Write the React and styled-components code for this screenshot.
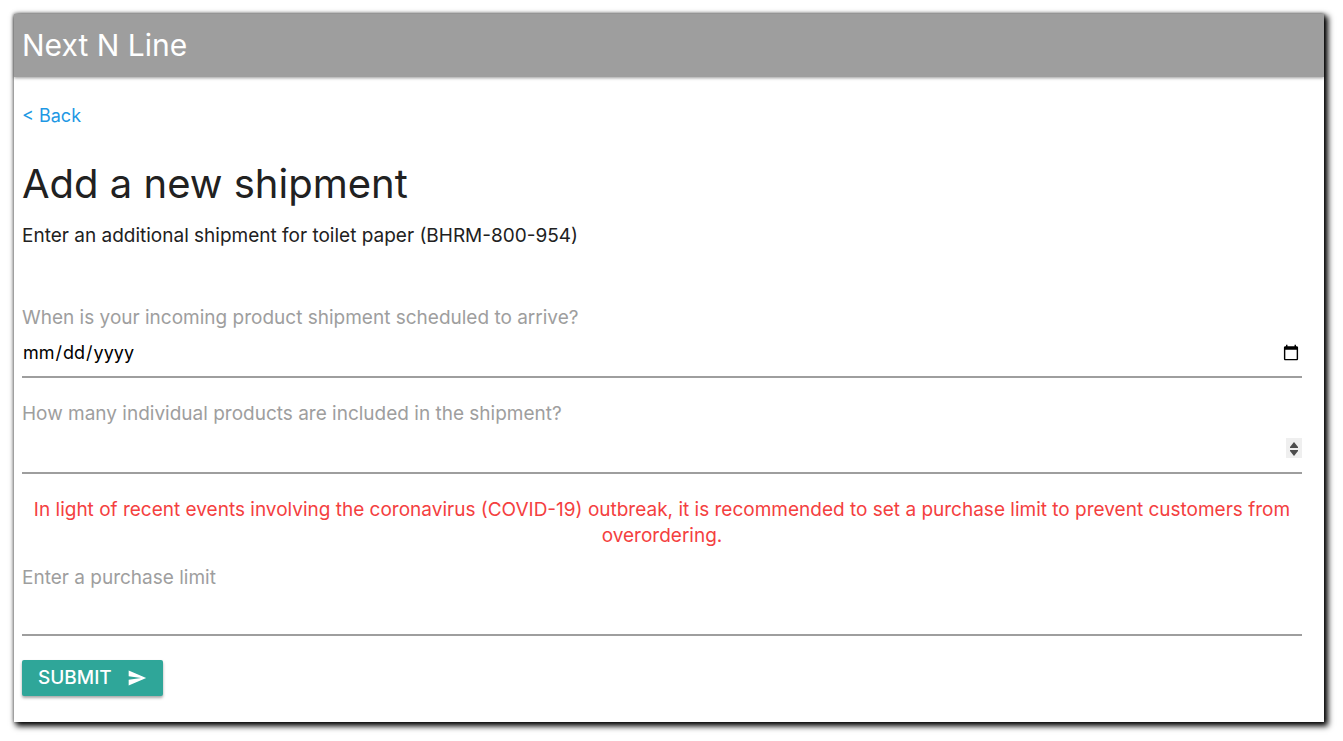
import React from "react";
import styled, { createGlobalStyle } from "styled-components";

const GlobalStyle = createGlobalStyle`
  *, *::before, *::after { box-sizing: border-box; }
  body {
    margin: 0;
    background: #fff;
    color: #212121;
    font-family: Inter, "Liberation Sans", sans-serif;
    font-size: 19px;
    line-height: 26px;
  }
`;

const Window = styled.div`
  margin: 14px 19px 19px 14px;
  background: #fff;
  box-shadow: 0 0 4px rgba(0, 0, 0, 0.5), 3px 3px 6px 1px #000;
`;

const Header = styled.header`
  padding: 0 8px;
  background: #9e9e9e;
  color: #fff;
  font-size: 30px;
  line-height: 63px;
  box-shadow: 0 1px 3px rgba(0, 0, 0, 0.4);
`;

const Content = styled.main`
  padding: 26px 22px 26px 8px;
`;

const BackLink = styled.a`
  display: block;
  width: fit-content;
  color: #1e98e4;
  font-size: 18px;
  text-decoration: none;
`;

const Title = styled.h1`
  margin: 30px 0 14px;
  font-size: 40px;
  line-height: 50px;
  font-weight: 400;
`;

const Intro = styled.p`
  margin: 0 0 56px;
`;

const Form = styled.form`
  display: flex;
  flex-direction: column;
`;

const Field = styled.div`
  display: flex;
  flex-direction: column;
  margin-bottom: 23px;
`;

const Label = styled.label`
  color: #9e9e9e;
`;

const Input = styled.input`
  width: 100%;
  height: ${({ $compact }) => ($compact ? 45 : 47)}px;
  padding: 0 0 2px;
  border: 0;
  border-bottom: 2px solid #9e9e9e;
  border-radius: 0;
  outline: 0;
  background: transparent;
  color: #000;
  font: inherit;
  font-size: 18px;

  &::-webkit-inner-spin-button {
    appearance: none;
    width: 16px;
    height: 20px;
    opacity: 1;
    background: #efefef
      url("data:image/svg+xml,%3Csvg xmlns='http://www.w3.org/2000/svg' width='16' height='20'%3E%3Cpath d='M8 4l4 5v1H4V9zM8 18l4-5v-1H4v1z' fill='%234d4d4d'/%3E%3C/svg%3E")
      center no-repeat;
  }
`;

const Notice = styled.p`
  margin: 0 0 16px;
  color: #f44040;
  text-align: center;
`;

const SubmitButton = styled.button`
  display: flex;
  align-items: center;
  align-self: flex-start;
  gap: 15px;
  height: 36px;
  margin: 1px 0 0;
  padding: 0 16px;
  border: 0;
  border-radius: 2px;
  background: #2fa699;
  color: #fff;
  font: inherit;
  font-weight: 500;
  text-transform: uppercase;
  box-shadow: 0 2px 3px rgba(0, 0, 0, 0.35);
  cursor: pointer;
`;

const SendIcon = () => (
  <svg width="20" height="20" viewBox="0 0 24 24" fill="currentColor" aria-hidden="true">
    <path d="M2.01 21L23 12 2.01 3 2 10l15 2-15 2z" />
  </svg>
);

export default function App() {
  return (
    <>
      <GlobalStyle />
      <Window>
        <Header>Next N Line</Header>
        <Content>
          <BackLink href="#back">&lt; Back</BackLink>
          <Title>Add a new shipment</Title>
          <Intro>Enter an additional shipment for toilet paper (BHRM-800-954)</Intro>
          <Form onSubmit={(event) => event.preventDefault()}>
            <Field>
              <Label htmlFor="arrival">When is your incoming product shipment scheduled to arrive?</Label>
              <Input id="arrival" type="date" />
            </Field>
            <Field>
              <Label htmlFor="quantity">How many individual products are included in the shipment?</Label>
              <Input id="quantity" type="number" />
            </Field>
            <Notice>
              In light of recent events involving the coronavirus (COVID-19) outbreak, it is recommended to set a
              purchase limit to prevent customers from overordering.
            </Notice>
            <Field>
              <Label htmlFor="limit">Enter a purchase limit</Label>
              <Input id="limit" type="text" inputMode="numeric" $compact />
            </Field>
            <SubmitButton type="submit">
              Submit
              <SendIcon />
            </SubmitButton>
          </Form>
        </Content>
      </Window>
    </>
  );
}
